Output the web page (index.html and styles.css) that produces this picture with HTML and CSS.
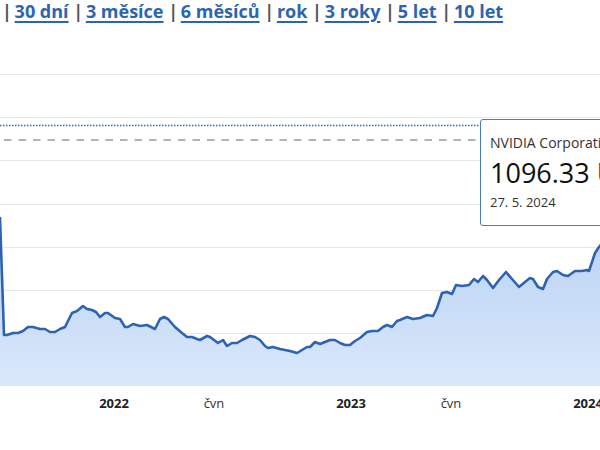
FILE: index.html
```html
<!DOCTYPE html>
<html lang="cs">
<head>
<meta charset="utf-8">
<title>NVIDIA Corporation – graf</title>
<link rel="stylesheet" href="styles.css">
</head>
<body>
<nav class="ranges">
  <span class="sep">|</span> <a href="#">30 dní</a> <span class="sep">|</span> <a href="#">3 měsíce</a> <span class="sep">|</span> <a href="#">6 měsíců</a> <span class="sep">|</span> <a href="#">rok</a> <span class="sep">|</span> <a href="#">3 roky</a> <span class="sep">|</span> <a href="#">5 let</a> <span class="sep">|</span> <a href="#">10 let</a>
</nav>
<div class="chart">
  <svg class="plot" width="600" height="420" viewBox="0 30 600 420" xmlns="http://www.w3.org/2000/svg">
    <defs>
      <linearGradient id="fillGrad" gradientUnits="userSpaceOnUse" x1="0" y1="220" x2="0" y2="386">
        <stop offset="0" stop-color="#b7d1f3"/>
        <stop offset="1" stop-color="#dae8fb"/>
      </linearGradient>
    </defs>
    <g class="grid">
      <line x1="0" y1="74.5" x2="600" y2="74.5"/>
      <line x1="0" y1="117.5" x2="600" y2="117.5"/>
      <line x1="0" y1="160.5" x2="600" y2="160.5"/>
      <line x1="0" y1="204.5" x2="600" y2="204.5"/>
      <line x1="0" y1="247.5" x2="600" y2="247.5"/>
      <line x1="0" y1="290.5" x2="600" y2="290.5"/>
      <line x1="0" y1="333.5" x2="600" y2="333.5"/>
    </g>
    <line class="dotted" x1="0" y1="125.5" x2="600" y2="125.5"/>
    <line class="dashed" x1="4" y1="140" x2="600" y2="140"/>
    <path class="area" d="M0,218 L4,335 7,335 13,333 18,333 23,331 28,327 33,327 40,329 45,329 50,332 55,332 60,329 65,327 72,313 77,311 83,306 87,309 92,310 96,312 100,317 105,313 108,313 115,318 120,319 125,327 128,327 133,324 140,326 147,325 155,329 160,319 164,317 168,319 175,327 182,333 187,337 192,337 197,339 200,340 207,336 210,337 218,343 223,340 227,346 232,343 237,343 242,340 250,336 255,337 260,340 265,346 268,348 273,347 280,349 285,350 290,351 297,353 302,350 307,347 310,347 315,342 320,344 325,342 330,340 335,340 340,343 345,345 350,345 355,341 360,338 367,332 372,331 378,331 383,327 387,325 392,327 397,321 400,320 407,317 413,319 420,318 427,315 433,316 437,308 442,293 447,292 452,294 456,285 462,286 469,285 474,279 478,282 483,276 487,280 493,288 499,280 506,272 512,279 519,287 525,282 530,278 533,279 538,287 543,289 547,279 553,272 557,271 563,275 568,276 575,271 582,271 587,270 589,271 595,253 599,247 605,240 L605,386 L0,386 Z"/>
    <path class="line" d="M0,218 L4,335 7,335 13,333 18,333 23,331 28,327 33,327 40,329 45,329 50,332 55,332 60,329 65,327 72,313 77,311 83,306 87,309 92,310 96,312 100,317 105,313 108,313 115,318 120,319 125,327 128,327 133,324 140,326 147,325 155,329 160,319 164,317 168,319 175,327 182,333 187,337 192,337 197,339 200,340 207,336 210,337 218,343 223,340 227,346 232,343 237,343 242,340 250,336 255,337 260,340 265,346 268,348 273,347 280,349 285,350 290,351 297,353 302,350 307,347 310,347 315,342 320,344 325,342 330,340 335,340 340,343 345,345 350,345 355,341 360,338 367,332 372,331 378,331 383,327 387,325 392,327 397,321 400,320 407,317 413,319 420,318 427,315 433,316 437,308 442,293 447,292 452,294 456,285 462,286 469,285 474,279 478,282 483,276 487,280 493,288 499,280 506,272 512,279 519,287 525,282 530,278 533,279 538,287 543,289 547,279 553,272 557,271 563,275 568,276 575,271 582,271 587,270 589,271 595,253 599,247 605,240"/>
    <g class="axis">
      <text class="year" x="114" y="408">2022</text>
      <text class="month" x="214" y="408">čvn</text>
      <text class="year" x="351" y="408">2023</text>
      <text class="month" x="451" y="408">čvn</text>
      <text class="year" x="588" y="408">2024</text>
    </g>
  </svg>
  <div class="tooltip">
    <div class="tt-name">NVIDIA Corporation</div>
    <div class="tt-value">1096.33 <span class="tt-cur">USD</span></div>
    <div class="tt-date">27. 5. 2024</div>
  </div>
</div>
</body>
</html>
```

FILE: styles.css
```css
html, body {
  margin: 0;
  padding: 0;
  background: #ffffff;
  overflow: hidden;
}

body {
  width: 600px;
  height: 450px;
  font-family: "Open Sans", "Noto Sans", sans-serif;
  position: relative;
}

.ranges {
  margin-top: -1px;
  padding-left: 2px;
  font-size: 18px;
  font-weight: 700;
  line-height: 24px;
  height: 31px;
  white-space: nowrap;
  color: #555555;
}

.ranges a {
  color: #2c64b4;
  text-decoration: underline;
  text-decoration-thickness: 2px;
  text-underline-offset: 3px;
}

.ranges .sep {
  color: #555555;
  letter-spacing: -2px;
}

.chart {
  position: relative;
  height: 420px;
}

.plot {
  display: block;
}

.grid line {
  stroke: #e8e8e8;
  stroke-width: 1;
}

.dotted {
  stroke: #3a6fc0;
  stroke-width: 1.5;
  stroke-dasharray: 1.5 1.5;
}

.dashed {
  stroke: #9a9a9a;
  stroke-width: 1.5;
  stroke-dasharray: 7.5 7;
}

.area {
  fill: url(#fillGrad);
  stroke: none;
}

.line {
  fill: none;
  stroke: #2e63b3;
  stroke-width: 2.6;
  stroke-linejoin: round;
  stroke-linecap: round;
}

.axis text {
  font-family: "Open Sans", "Noto Sans", sans-serif;
  font-size: 13px;
  text-anchor: middle;
}

.axis .year {
  font-weight: 700;
  fill: #222222;
}

.axis .month {
  fill: #333333;
}

.tooltip {
  position: absolute;
  left: 480px;
  top: 89px;
  width: 200px;
  height: 107px;
  box-sizing: border-box;
  border: 1px solid #4a7cc0;
  border-radius: 3px;
  background: #ffffff;
  padding: 14px 0 0 9px;
  color: #333333;
  display: flex;
  flex-direction: column;
  white-space: nowrap;
}

.tt-name {
  font-size: 14px;
  line-height: 18px;
}

.tt-value {
  margin-top: 5px;
  font-size: 27px;
  line-height: 32px;
  color: #111111;
}

.tt-cur {
  color: #8a3412;
}

.tt-date {
  margin-top: 4px;
  font-size: 13px;
  line-height: 18px;
}
```
